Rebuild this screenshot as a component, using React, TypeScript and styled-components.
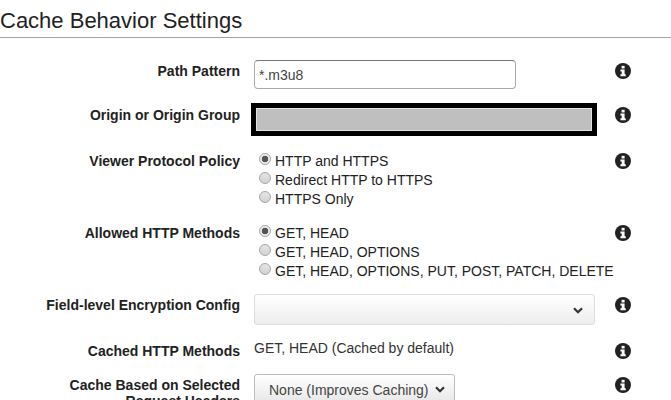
import styled, { createGlobalStyle } from "styled-components"

const GlobalStyle = createGlobalStyle`
  html, body {
    margin: 0;
    padding: 0;
    background: #fff;
    overflow: hidden;
  }
  body {
    font-family: "Liberation Sans", Arial, sans-serif;
    color: #222;
  }
`

const InfoIcon = () => (
  <svg width="16" height="16" viewBox="0 0 17 17">
    <circle cx="8.5" cy="8.5" r="8.5" fill="#222" />
    <rect x="7" y="3" width="3.2" height="2.8" fill="#fff" />
    <path d="M5.8 7h4.4v5h1.2v2H5.8v-2h1.3V9H5.8z" fill="#fff" />
  </svg>
)

const Chevron = () => (
  <svg width="10" height="7" viewBox="0 0 10 7">
    <path d="M1 1.2 5 5.2 9 1.2" fill="none" stroke="#333" strokeWidth="2.2" />
  </svg>
)

interface RadioGroupProps {
  options: string[];
}

const RadioGroup = (props: RadioGroupProps) => (
  <Radios>
    {props.options.map((option, i) => (
      <RadioLine key={option}>
        <RadioDot $checked={i === 0} />
        {option}
      </RadioLine>
    ))}
  </Radios>
)

interface RowProps {
  label: string;
  children: JSX.Element;
  $height: number;
  $labelTop?: number;
  $iconTop?: number;
}

const Row = (props: RowProps) => (
  <RowWrap $height={props.$height}>
    <Label $top={props.$labelTop ?? 0}>{props.label}</Label>
    <Control>{props.children}</Control>
    <Help $top={props.$iconTop ?? 0}>
      <InfoIcon />
    </Help>
  </RowWrap>
)

const App = () => {
  return (
    <Page>
      <GlobalStyle />
      <Title>Cache Behavior Settings</Title>
      <Form>
        <Row label="Path Pattern" $height={43} $labelTop={3} $iconTop={3}>
          <TextInput>*.m3u8</TextInput>
        </Row>
        <Row label="Origin or Origin Group" $height={49} $labelTop={4} $iconTop={4}>
          <Redacted>
            <RedactedFill />
          </Redacted>
        </Row>
        <Row label="Viewer Protocol Policy" $height={72} $labelTop={1} $iconTop={1}>
          <RadioGroup options={["HTTP and HTTPS", "Redirect HTTP to HTTPS", "HTTPS Only"]} />
        </Row>
        <Row label="Allowed HTTP Methods" $height={70} $labelTop={1} $iconTop={1}>
          <RadioGroup options={["GET, HEAD", "GET, HEAD, OPTIONS", "GET, HEAD, OPTIONS, PUT, POST, PATCH, DELETE"]} />
        </Row>
        <Row label="Field-level Encryption Config" $height={46} $labelTop={3} $iconTop={3}>
          <SelectBox>
            <Chevron />
          </SelectBox>
        </Row>
        <Row label="Cached HTTP Methods" $height={34} $labelTop={3} $iconTop={3}>
          <PlainValue>GET, HEAD (Cached by default)</PlainValue>
        </Row>
        <Row label="Cache Based on Selected Request Headers" $height={60} $labelTop={3} $iconTop={3}>
          <DropButton>
            None (Improves Caching)
            <Chevron />
          </DropButton>
        </Row>
      </Form>
    </Page>
  )
}

export default App

const Page = styled.div`
  width: 671px;
  height: 400px;
  overflow: hidden;
  background: #fff;
`

const Title = styled.h1`
  margin: 0;
  height: 37px;
  box-sizing: content-box;
  border-bottom: 1px solid #a3a3a3;
  font-size: 22px;
  font-weight: 400;
  line-height: 41px;
  color: #222;
  white-space: nowrap;
`

const Form = styled.div`
  display: flex;
  flex-direction: column;
  padding-top: 22px;
`

const RowWrap = styled.div<{ $height: number }>`
  display: grid;
  grid-template-columns: 240px 375px 17px;
  height: ${(p) => p.$height}px;
  flex: none;
`

const Label = styled.div<{ $top: number }>`
  margin-top: ${(p) => p.$top}px;
  padding-left: 30px;
  text-align: right;
  font-size: 14px;
  font-weight: 700;
  line-height: 16px;
  color: #222;
`

const Control = styled.div`
  padding-left: 14px;
  font-size: 14px;
  color: #222;
`

const Help = styled.div<{ $top: number }>`
  margin-top: ${(p) => p.$top}px;
  grid-column: 3;
`

const TextInput = styled.div`
  box-sizing: border-box;
  width: 262px;
  height: 29px;
  padding-left: 4px;
  border: 1px solid #aaa;
  border-top-color: #777;
  border-radius: 4px;
  font-size: 14px;
  line-height: 29px;
  color: #444;
`

const Redacted = styled.div`
  box-sizing: border-box;
  width: 346px;
  height: 33px;
  margin-left: -3px;
  border: 5px solid #000;
  background: #fff;
`

const RedactedFill = styled.div`
  height: 100%;
  border: 1px solid #e2e2e2;
  box-sizing: border-box;
  background: #bfbfbf;
`

const Radios = styled.div`
  display: flex;
  flex-direction: column;
  margin-top: -1px;
  padding-left: 5px;
`

const RadioLine = styled.div`
  display: flex;
  align-items: center;
  gap: 4px;
  height: 19px;
  font-size: 14px;
  white-space: nowrap;
  color: #222;
`

const RadioDot = styled.span<{ $checked: boolean }>`
  box-sizing: border-box;
  flex: none;
  width: 12px;
  height: 12px;
  margin-top: -3px;
  border-radius: 50%;
  border: 1px solid #a6a6a6;
  background: ${(p) =>
    p.$checked
      ? "radial-gradient(circle, #555 0 3px, #eee 3.6px)"
      : "linear-gradient(#e4e4e4, #d2d2d2)"};
`

const SelectBox = styled.div`
  box-sizing: border-box;
  display: flex;
  align-items: center;
  justify-content: flex-end;
  width: 341px;
  height: 31px;
  padding: 2px 11px 0 0;
  border: 1px solid #ddd;
  border-radius: 3px;
  background: linear-gradient(#fff, #ededed);
`

const PlainValue = styled.div`
  font-size: 14px;
  line-height: 16px;
  color: #333;
`

const DropButton = styled.div`
  box-sizing: border-box;
  display: inline-flex;
  align-items: center;
  gap: 6px;
  height: 31px;
  padding: 0 9px 0 14px;
  border: 1px solid #bbb;
  border-radius: 3px;
  background: linear-gradient(#fff, #e6e6e6);
  font-size: 14px;
  color: #444;
  white-space: nowrap;
`
